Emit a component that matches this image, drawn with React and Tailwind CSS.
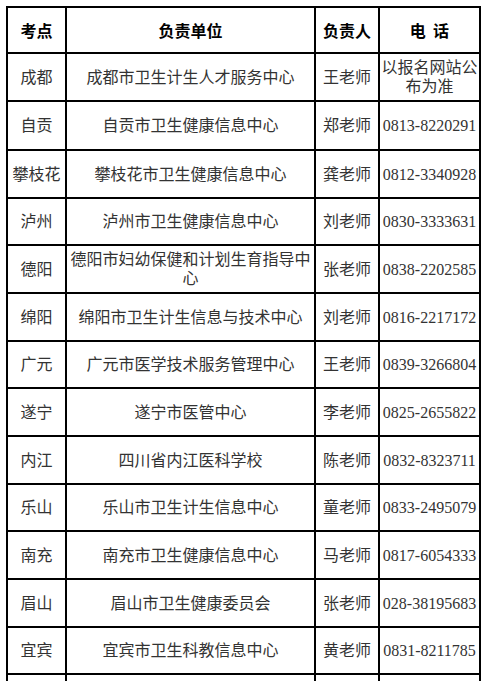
const rows = [
  { h: 'h-[48px]', city: '成都', unit: '成都市卫生计生人才服务中心', person: '王老师', phone: '以报名网站公布为准' },
  { h: 'h-[49px]', city: '自贡', unit: '自贡市卫生健康信息中心', person: '郑老师', phone: '0813-8220291' },
  { h: 'h-[48px]', city: '攀枝花', unit: '攀枝花市卫生健康信息中心', person: '龚老师', phone: '0812-3340928' },
  { h: 'h-[47px]', city: '泸州', unit: '泸州市卫生健康信息中心', person: '刘老师', phone: '0830-3333631' },
  { h: 'h-[48px]', city: '德阳', unit: '德阳市妇幼保健和计划生育指导中心', person: '张老师', phone: '0838-2202585' },
  { h: 'h-[48px]', city: '绵阳', unit: '绵阳市卫生计生信息与技术中心', person: '刘老师', phone: '0816-2217172' },
  { h: 'h-[47px]', city: '广元', unit: '广元市医学技术服务管理中心', person: '王老师', phone: '0839-3266804' },
  { h: 'h-[48px]', city: '遂宁', unit: '遂宁市医管中心', person: '李老师', phone: '0825-2655822' },
  { h: 'h-[48px]', city: '内江', unit: '四川省内江医科学校', person: '陈老师', phone: '0832-8323711' },
  { h: 'h-[47px]', city: '乐山', unit: '乐山市卫生计生信息中心', person: '童老师', phone: '0833-2495079' },
  { h: 'h-[48px]', city: '南充', unit: '南充市卫生健康信息中心', person: '马老师', phone: '0817-6054333' },
  { h: 'h-[48px]', city: '眉山', unit: '眉山市卫生健康委员会', person: '张老师', phone: '028-38195683' },
  { h: 'h-[47px]', city: '宜宾', unit: '宜宾市卫生科教信息中心', person: '黄老师', phone: '0831-8211785' },
];

// column widths (each includes its right rule)
const c1 = 'w-[59px] border-r-2 border-black';
const c2 = 'w-[249px] border-r-2 border-black px-[2px]';
const c3 = 'w-[64px] border-r-2 border-black';
const c4 = 'w-[99px] px-[1px]';
const cell = 'flex items-center justify-center text-center h-full';

export default function App() {
  return (
    <div className="bg-white min-h-[681px] pt-[6px] pl-[6px]">
      <div
        className="w-[475px] border-x-2 border-t-2 border-black text-[16px]"
        style={{ fontFamily: '"Liberation Serif", "Noto Sans CJK SC", serif' }}
      >
        {/* header */}
        <div
          className="flex h-[46px] border-b-2 border-black font-bold text-black"
          style={{ fontFamily: '"Noto Sans CJK SC", sans-serif' }}
        >
          <div className={`${c1} ${cell}`}>考点</div>
          <div className={`${c2} ${cell}`}>负责单位</div>
          <div className={`${c3} ${cell}`}>负责人</div>
          <div className={`${c4} ${cell} whitespace-pre`}>电  话</div>
        </div>

        {rows.map((r) => (
          <div key={r.city} className={`flex ${r.h} border-b-2 border-black text-[#333] leading-[19px]`}>
            <div className={`${c1} ${cell}`}>{r.city}</div>
            <div className={`${c2} ${cell}`}>{r.unit}</div>
            <div className={`${c3} ${cell}`}>{r.person}</div>
            <div className={`${c4} ${cell}`}>{r.phone}</div>
          </div>
        ))}

        {/* next row, cut off by the page edge */}
        <div className="flex h-[48px] border-b-2 border-black">
          <div className={`${c1} ${cell}`}></div>
          <div className={`${c2} ${cell}`}></div>
          <div className={`${c3} ${cell}`}></div>
          <div className={`${c4} ${cell}`}></div>
        </div>
      </div>
    </div>
  );
}
